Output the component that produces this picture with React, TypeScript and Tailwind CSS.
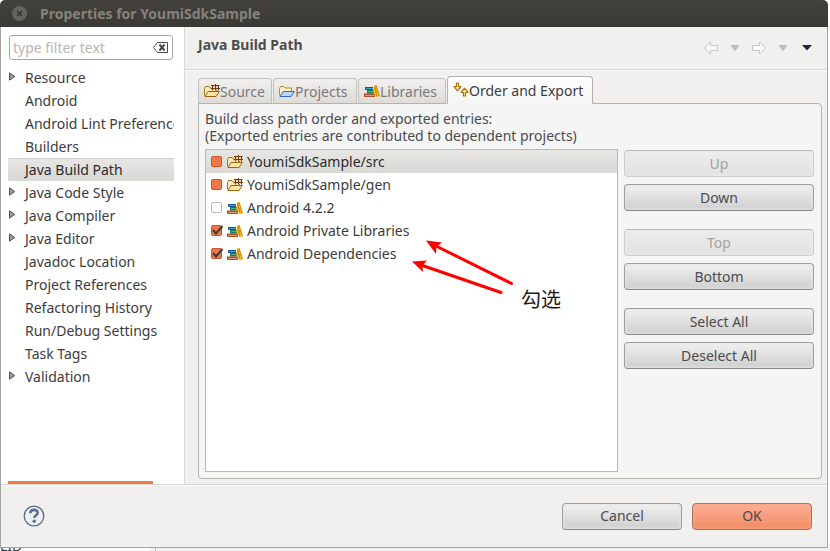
import { useState, type ReactNode } from "react";

const categories = [
  { name: "Resource", parent: true },
  { name: "Android" },
  { name: "Android Lint Preferences" },
  { name: "Builders" },
  { name: "Java Build Path" },
  { name: "Java Code Style", parent: true },
  { name: "Java Compiler", parent: true },
  { name: "Java Editor", parent: true },
  { name: "Javadoc Location" },
  { name: "Project References" },
  { name: "Refactoring History" },
  { name: "Run/Debug Settings" },
  { name: "Task Tags" },
  { name: "Validation", parent: true },
];

type Entry = { name: string; kind: "source" | "library"; state: "fixed" | "on" | "off" };

const initialEntries: Entry[] = [
  { name: "YoumiSdkSample/src", kind: "source", state: "fixed" },
  { name: "YoumiSdkSample/gen", kind: "source", state: "fixed" },
  { name: "Android 4.2.2", kind: "library", state: "off" },
  { name: "Android Private Libraries", kind: "library", state: "on" },
  { name: "Android Dependencies", kind: "library", state: "on" },
];

function FolderIcon({ blue = false }: { blue?: boolean }) {
  return (
    <svg width="16" height="16" viewBox="0 0 16 16" className="shrink-0" aria-hidden="true">
      <path
        d="M.5 12.500V5.500l1-2h3.500l1 1.500h6.500v3"
        fill={blue ? "#fff3c4" : "#fbe9bb"}
        stroke={blue ? "#b98a2e" : "#a8741a"}
      />
      <path
        d="M1 13.500 4 8.500h11.300L12 13.500z"
        fill={blue ? "#b9d5fb" : "#fbe3a0"}
        stroke={blue ? "#3b67b8" : "#9c6310"}
        strokeLinejoin="round"
      />
      {!blue && (
        <g>
          <path d="M7 2h8v5H7z" fill="#f5d59c" />
          <path d="M8.500 2v5.500M11.500 1v6.500M14.500 2v5.500M7 2.500h8.500M7 5.500h9" stroke="#6d3c17" fill="none" />
        </g>
      )}
    </svg>
  );
}

function BooksIcon() {
  return (
    <svg width="16" height="16" viewBox="0 0 16 16" className="shrink-0" aria-hidden="true">
      <path d="M1 4h8v3H1z" fill="#155e92" />
      <path d="M2 5.500h7" stroke="#3aa0c8" />
      <path d="M3 7h7v3.500H3z" fill="#0f7a55" />
      <path d="M4 8.500h6" stroke="#4fb58c" />
      <path d="M0 10.500h11V14H0z" fill="#a9502a" />
      <path d="M1 12.500h9.500" stroke="#dd9a74" />
      <path d="M9.500 9.500V6l1-3.500L12 2l3.500 11-3 1z" fill="#f9b916" />
      <path d="m12 2 3.500 11.500M10.500 3l2.500 10.500M10.500 5.500l2-.5M11.500 9l2.500-1" stroke="#d08600" fill="none" />
    </svg>
  );
}

function OrderIcon() {
  return (
    <svg width="16" height="16" viewBox="0 0 16 16" className="shrink-0" aria-hidden="true">
      <g fill="#ffe9a0" stroke="#b0720c" strokeWidth="1.200" strokeLinejoin="round">
        <path d="M3.500 1h2v3.500H8L4.500 8.800 1 4.500h2.500z" />
        <path d="M10.500 14h2v-3.500H15l-3.500-4.300L8 10.500h2.500z" />
      </g>
    </svg>
  );
}

function NavArrow({ forward = false }: { forward?: boolean }) {
  return (
    <svg width="16" height="14" viewBox="0 0 16 14" aria-hidden="true">
      <path
        d={
          forward
            ? "M1.500 4.500h7V1.500h1l5 5.500-5 5.500h-1v-3h-7z"
            : "M14.500 4.500h-7V1.500h-1L1.500 7l5 5.500h1v-3h7z"
        }
        fill="#f8f8f7"
        stroke="#c8c6c3"
      />
    </svg>
  );
}

function MenuArrow({ active = false }: { active?: boolean }) {
  return (
    <svg width="10" height="6" viewBox="0 0 10 6" aria-hidden="true">
      <path
        d={active ? "M0 0h10L5 5.500z" : "M1.500.5h7l-3.500 5z"}
        fill={active ? "#27203f" : "#c2c0be"}
        stroke={active ? "none" : "#b4b2af"}
      />
    </svg>
  );
}

function PushButton({
  children,
  disabled = false,
  primary = false,
}: {
  children: ReactNode;
  disabled?: boolean;
  primary?: boolean;
}) {
  const look = primary
    ? "border-[#a5745f] bg-linear-to-b from-[#fbb094] to-[#ef8b64] text-[#4c4c4c] shadow-[inset_0_0_3px_1px_#f9a585]"
    : disabled
      ? "border-[#cfcdcb] border-t-[#bbb9b7] bg-linear-to-b from-[#ededed] to-[#e1e1e1] text-[#a3a3a3] shadow-[inset_0_0_3px_1px_#ebebeb]"
      : "border-[#a09f9e] border-b-[#888786] bg-linear-to-b from-[#f1f1f1] to-[#cecece] text-[#4c4c4c] shadow-[inset_0_0_3px_1px_#e6e6e6]";
  return (
    <button
      type="button"
      disabled={disabled}
      className={`h-[27px] w-full rounded-[4px] border text-center leading-[24px] ${look}`}
    >
      {children}
    </button>
  );
}

const tabs = [
  { name: "Source", icon: <FolderIcon />, width: "w-[74px]" },
  { name: "Projects", icon: <FolderIcon blue />, width: "w-[84px]" },
  { name: "Libraries", icon: <BooksIcon />, width: "w-[88px]" },
  { name: "Order and Export", icon: <OrderIcon />, width: "w-[146px]" },
];

export default function App() {
  const [entries, setEntries] = useState(initialEntries);

  const toggle = (name: string) =>
    setEntries((list) =>
      list.map((e) =>
        e.name === name && e.state !== "fixed" ? { ...e, state: e.state === "on" ? "off" : "on" } : e,
      ),
    );

  return (
    <div className="flex h-screen flex-col bg-white font-['Noto_Sans','Noto_Sans_CJK_SC',sans-serif] text-[14px] text-[#3c3c3c]">
      <div className="mr-[2px] flex min-h-0 flex-1 flex-col">
        <header className="flex h-[27px] shrink-0 items-center gap-[13px] rounded-t-[5px] bg-linear-to-b from-[#42413c] to-[#3a3935] pl-3">
          <button
            type="button"
            aria-label="Close"
            className="flex size-[15px] items-center justify-center rounded-full bg-[#64625c]"
          >
            <svg width="7" height="7" viewBox="0 0 7 7" aria-hidden="true">
              <path d="m1 1 5 5M6 1 1 6" stroke="#35342f" strokeWidth="1.500" />
            </svg>
          </button>
          <h1 className="font-bold leading-[26px] text-[#85827b]">Properties for YoumiSdkSample</h1>
        </header>

        <div className="flex min-h-0 flex-1 flex-col border border-t-0 border-[#a5a3a0] bg-[#f1f0ee]">
          <div className="flex min-h-0 flex-1">
            <nav className="flex w-[184px] shrink-0 flex-col border-r border-[#dbd9d6] bg-white pt-2 pr-[10px] pl-[7px]">
              <div className="mr-px ml-px flex h-[25px] shrink-0 items-center rounded-[3px] border border-[#a9a6a2] bg-white pr-1 pl-[3px]">
                <input
                  type="text"
                  aria-label="Filter"
                  placeholder="type filter text"
                  className="min-w-0 flex-1 bg-transparent outline-none placeholder:text-[#bab5b0]"
                />
                <button type="button" aria-label="Clear filter">
                  <svg width="15" height="11" viewBox="0 0 15 11" aria-hidden="true">
                    <path d="M4.500.5h10v10h-10l-4-5z" fill="#fff" stroke="#4a4a4a" />
                    <path d="m6.500 2.500 5 6M11.500 2.500l-5 6" stroke="#4a4a4a" strokeWidth="2" />
                  </svg>
                </button>
              </div>
              <ul className="mt-[6px]">
                {categories.map((c) => (
                  <li key={c.name}>
                    <button
                      type="button"
                      className={`flex h-[23px] w-full items-center overflow-hidden text-left whitespace-nowrap ${
                        c.name === "Java Build Path"
                          ? "bg-linear-to-b from-[#e8e7e5] to-[#d9d8d5] text-[#2b2b2b] shadow-[inset_0_1px_0_#d3d1ce]"
                          : ""
                      }`}
                    >
                      <span className="w-[17px] shrink-0">
                        {c.parent && (
                          <svg width="8" height="9" viewBox="0 0 8 9" className="-mt-[3px] ml-px" aria-hidden="true">
                            <path d="M.5.8 5.800 4.500.5 8.200z" fill="#999" stroke="#555" />
                          </svg>
                        )}
                      </span>
                      {c.name}
                    </button>
                  </li>
                ))}
              </ul>
              <div className="mt-auto mr-[21px] h-[3px] bg-[#f07746]" />
            </nav>

            <main className="flex min-w-0 flex-1 flex-col">
              <div className="flex h-[43px] shrink-0 items-start justify-between border-b border-[#d9d7d4] pt-2 pr-[15px] pl-[13px] shadow-[0_1px_0_#fafafa]">
                <h2 className="font-bold leading-[20px] text-[#4c4c4c]">Java Build Path</h2>
                <div className="mt-[6px] flex items-center">
                  <button type="button" disabled aria-label="Back" className="mr-[11px]">
                    <NavArrow />
                  </button>
                  <button type="button" disabled aria-label="Back history" className="mr-[11px]">
                    <MenuArrow />
                  </button>
                  <button type="button" disabled aria-label="Forward" className="mr-[11px]">
                    <NavArrow forward />
                  </button>
                  <button type="button" disabled aria-label="Forward history" className="mr-[14px]">
                    <MenuArrow />
                  </button>
                  <button type="button" aria-label="View menu">
                    <MenuArrow active />
                  </button>
                </div>
              </div>

              <div className="flex min-h-0 flex-1 flex-col pt-[6px] pr-[5px] pb-[5px] pl-[13px]">
                <div role="tablist" className="z-10 -mb-px flex shrink-0 items-end gap-px">
                  {tabs.map((t) => {
                    const active = t.name === "Order and Export";
                    return (
                      <button
                        key={t.name}
                        type="button"
                        role="tab"
                        aria-selected={active}
                        className={`flex items-center rounded-t-[4px] border pl-[5px] whitespace-nowrap ${t.width} ${
                          active
                            ? "h-[28px] border-[#b5b2ae] border-b-[#f5f5f5] bg-linear-to-b from-white to-[#f5f5f5]"
                            : "h-[26px] border-[#c3c0bc] border-b-[#b5b2ae] bg-linear-to-b from-[#f1f0ef] to-[#dedbd8] text-[#7b7978]"
                        }`}
                      >
                        {t.icon}
                        {t.name}
                      </button>
                    );
                  })}
                </div>

                <section
                  role="tabpanel"
                  aria-label="Order and Export"
                  className="flex min-h-0 flex-1 flex-col rounded-[4px] rounded-tl-none border border-[#b5b2ae] bg-[#f5f5f5] pt-[6px] pr-[7px] pb-[6px] pl-[6px]"
                >
                  <p className="leading-[17px] text-[#4c4c4c]">
                    Build class path order and exported entries:
                    <br />
                    (Exported entries are contributed to dependent projects)
                  </p>
                  <div className="mt-[5px] flex min-h-0 flex-1 gap-[6px]">
                    <div className="relative min-w-0 flex-1 border border-[#bab8b5] bg-white">
                      <ul>
                        {entries.map((e, i) => (
                          <li
                            key={e.name}
                            className={`flex h-[23px] items-center pl-[5px] ${
                              i === 0 ? "bg-linear-to-b from-[#e8e7e5] to-[#d9d8d5] text-[#2b2b2b]" : ""
                            }`}
                          >
                            <label className="flex items-center">
                              <span className="relative mr-[5px] flex">
                                <input
                                  type="checkbox"
                                  checked={e.state !== "off"}
                                  onChange={() => toggle(e.name)}
                                  className="size-[11px] appearance-none rounded-[2px] border border-[#bdbbb8] bg-white checked:border-[#c9552c] checked:bg-[#f07746]"
                                />
                                {e.state === "on" && (
                                  <svg
                                    width="13"
                                    height="11"
                                    viewBox="0 0 13 11"
                                    className="pointer-events-none absolute top-0 left-0"
                                    aria-hidden="true"
                                  >
                                    <path d="m2 5 3 3.500L11.500 1" fill="none" stroke="#3b3b3b" strokeWidth="2" />
                                  </svg>
                                )}
                              </span>
                              {e.kind === "source" ? <FolderIcon /> : <BooksIcon />}
                              <span className="ml-1">{e.name}</span>
                            </label>
                          </li>
                        ))}
                      </ul>
                      <svg
                        width="110"
                        height="60"
                        viewBox="0 0 110 60"
                        className="pointer-events-none absolute top-[87px] left-[204px]"
                        aria-hidden="true"
                      >
                        <g stroke="#f00" strokeWidth="3" strokeLinecap="round">
                          <path d="M101.500 46.500 24 8M91 55.500 11 28" />
                        </g>
                        <path d="m16 3.500 16 2-5.500 4.200-.5 7.300zM2 24.500l15-1-4.500 4.900.5 6.600z" fill="#f00" />
                      </svg>
                      <span className="pointer-events-none absolute top-[135px] left-[315px] text-[20px] leading-[30px] text-[#231815]">
                        勾选
                      </span>
                    </div>

                    <div className="flex w-[190px] shrink-0 flex-col gap-[18px] pt-px">
                      <div className="flex flex-col gap-[7px]">
                        <PushButton disabled>Up</PushButton>
                        <PushButton>Down</PushButton>
                      </div>
                      <div className="flex flex-col gap-[7px]">
                        <PushButton disabled>Top</PushButton>
                        <PushButton>Bottom</PushButton>
                      </div>
                      <div className="flex flex-col gap-[7px]">
                        <PushButton>Select All</PushButton>
                        <PushButton>Deselect All</PushButton>
                      </div>
                    </div>
                  </div>
                </section>
              </div>
            </main>
          </div>

          <footer className="flex h-[63px] shrink-0 items-center border-t border-[#d9d7d4] pr-[15px] pl-[22px] shadow-[inset_0_1px_0_#fafafa]">
            <button type="button" aria-label="Help" className="mr-auto">
              <svg width="22" height="22" viewBox="0 0 22 22" aria-hidden="true">
                <circle cx="11" cy="11" r="9.800" fill="#eef0f2" stroke="#576a8e" strokeWidth="1.300" />
                <path
                  d="M7.300 8.300c0-4.600 7.600-4.300 7.400-.4-.1 2.400-3.300 2.500-3.300 5"
                  fill="none"
                  stroke="#5c6d90"
                  strokeWidth="2.600"
                />
                <circle cx="11.200" cy="16.300" r="1.700" fill="#5c6d90" />
              </svg>
            </button>
            <div className="flex w-[250px] gap-[10px]">
              <PushButton>Cancel</PushButton>
              <PushButton primary>OK</PushButton>
            </div>
          </footer>
        </div>
      </div>

      <div className="flex h-[3px] shrink-0 overflow-hidden bg-[#f1f0ee]" aria-hidden="true">
        <div className="flex w-[156px] items-end border-r border-[#bab8b5] pr-[5px]">
          <div className="flex h-[3px] w-full items-end bg-white leading-[10px]">LID</div>
        </div>
      </div>
    </div>
  );
}
